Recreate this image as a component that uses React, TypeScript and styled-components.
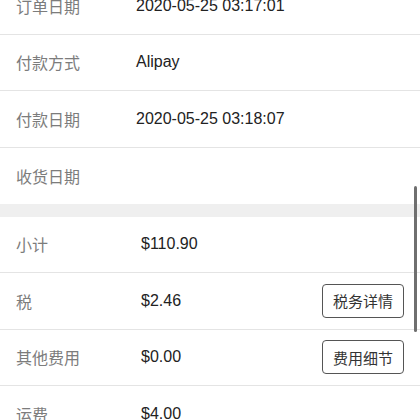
import React from 'react';
import styled, { createGlobalStyle } from 'styled-components';

const GlobalStyle = createGlobalStyle`
  html, body {
    margin: 0;
    padding: 0;
    background: #fff;
    overflow: hidden;
  }
  body {
    font-family: "Liberation Sans", "Noto Sans CJK SC", Arial, sans-serif;
  }
`;

const Page = styled.div`
  position: relative;
  width: 420px;
  height: 420px;
  overflow: hidden;
`;

const Scroller = styled.div`
  margin-top: -22px;
`;

const Section = styled.div`
  background: #fff;
`;

const Row = styled.div<{ $labelWidth: number; $last?: boolean }>`
  box-sizing: border-box;
  height: 56.5px;
  display: grid;
  grid-template-columns: ${(p) => p.$labelWidth}px 1fr auto;
  align-items: center;
  padding: 0 16px;
  border-bottom: ${(p) => (p.$last ? 'none' : '1px solid #e4e4e4')};
`;

const Label = styled.span`
  font-size: 16px;
  color: #7c7c7c;
`;

const Value = styled.span`
  font-size: 16px;
  color: #222;
`;

const Gap = styled.div`
  height: 12.5px;
  background: #efefef;
`;

const DetailButton = styled.button`
  box-sizing: border-box;
  height: 34px;
  width: 82px;
  padding: 0;
  border: 1px solid #555;
  border-radius: 4px;
  background: #fff;
  color: #333;
  font-family: "Noto Sans CJK SC", sans-serif;
  font-size: 15px;
`;

const ScrollThumb = styled.div`
  position: absolute;
  left: 414px;
  top: 186px;
  width: 3px;
  height: 146px;
  border-radius: 2px;
  background: #6f6f6f;
`;

const orderRows = [
  { label: '订单日期', value: '2020-05-25 03:17:01' },
  { label: '付款方式', value: 'Alipay' },
  { label: '付款日期', value: '2020-05-25 03:18:07' },
  { label: '收货日期', value: '' },
];

const costRows = [
  { label: '小计', value: '$110.90' },
  { label: '税', value: '$2.46', action: '税务详情' },
  { label: '其他费用', value: '$0.00', action: '费用细节' },
  { label: '运费', value: '$4.00' },
];

export default function App(): JSX.Element {
  return (
    <Page>
      <GlobalStyle />
      <Scroller>
        <Section>
          {orderRows.map((r, i) => (
            <Row key={r.label} $labelWidth={120} $last={i === orderRows.length - 1}>
              <Label>{r.label}</Label>
              <Value>{r.value}</Value>
            </Row>
          ))}
        </Section>
        <Gap />
        <Section>
          {costRows.map((r) => (
            <Row key={r.label} $labelWidth={125}>
              <Label>{r.label}</Label>
              <Value>{r.value}</Value>
              {r.action ? <DetailButton>{r.action}</DetailButton> : <span />}
            </Row>
          ))}
        </Section>
      </Scroller>
      <ScrollThumb />
    </Page>
  );
}
